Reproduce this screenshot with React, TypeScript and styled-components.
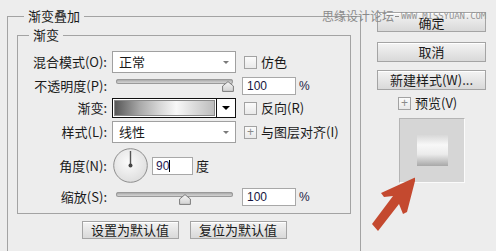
import React from 'react'
import styled, { createGlobalStyle } from 'styled-components'

const GlobalStyle = createGlobalStyle`
    html, body {
        margin: 0;
        padding: 0;
        width: 496px;
        height: 251px;
        overflow: hidden;
        background: #ededed;
    }
    body {
        font-family: 'Noto Sans CJK SC', 'Liberation Sans', sans-serif;
        font-size: 13px;
        color: #1a1a1a;
    }
`

function App() {
    return (
        <Page>
            <GlobalStyle />
            <Group>
                <Legend $offset={16}>渐变叠加</Legend>
                <Inner>
                    <Legend $offset={11}>渐变</Legend>
                    <Row $h={22} $mt={8}>
                        <Label>混合模式(O):</Label>
                        <Select>
                            正常
                            <Caret />
                        </Select>
                        <Extra>
                            <CheckBox />
                            <CheckText>仿色</CheckText>
                        </Extra>
                    </Row>
                    <Row $h={17} $mt={4}>
                        <Label>不透明度(P):</Label>
                        <Slider $top={2} pos={106} />
                        <Extra>
                            <NumberBox>100</NumberBox>
                            <Percent>%</Percent>
                        </Extra>
                    </Row>
                    <Row $h={20} $mt={4}>
                        <Label>渐变:</Label>
                        <GradientPicker>
                            <GradientBar />
                            <GradientArrow>
                                <BlackCaret />
                            </GradientArrow>
                        </GradientPicker>
                        <Extra>
                            <CheckBox />
                            <CheckText>反向(R)</CheckText>
                        </Extra>
                    </Row>
                    <Row $h={22} $mt={3}>
                        <Label>样式(L):</Label>
                        <Select>
                            线性
                            <Caret />
                        </Select>
                        <Extra>
                            <CheckBox>+</CheckBox>
                            <CheckText>与图层对齐(I)</CheckText>
                        </Extra>
                    </Row>
                    <Row $h={35} $mt={5}>
                        <Label>角度(N):</Label>
                        <Control>
                            <Dial />
                            <AngleBox>
                                90
                                <TextCaret />
                            </AngleBox>
                            <Unit>度</Unit>
                        </Control>
                    </Row>
                    <Row $h={17} $mt={5}>
                        <Label>缩放(S):</Label>
                        <Slider $top={4} pos={63} />
                        <Extra>
                            <NumberBox>100</NumberBox>
                            <Percent>%</Percent>
                        </Extra>
                    </Row>
                </Inner>
                <DefaultBar>
                    <Button $w={97} $h={18}>设置为默认值</Button>
                    <Button $w={97} $h={18}>复位为默认值</Button>
                </DefaultBar>
            </Group>
            <Side>
                <Button $w={109} $h={20} $mt={12}>
                    <ButtonText $dy={2}>确定</ButtonText>
                </Button>
                <Button $w={109} $h={20} $mt={10}>取消</Button>
                <Button $w={109} $h={20} $mt={8}>新建样式(W)...</Button>
                <PreviewToggle>
                    <CheckBox>+</CheckBox>
                    <CheckText>预览(V)</CheckText>
                </PreviewToggle>
                <PreviewBox>
                    <PreviewSwatch />
                </PreviewBox>
            </Side>
            <Watermark>
                思缘设计论坛
                <WatermarkDash />
                <WatermarkUrl>WWW.MISSYUAN.COM</WatermarkUrl>
            </Watermark>
            <Arrow width='50' height='64' viewBox='0 0 50 64'>
                <polygon points='51,7 16,23 19,27 28,26 7,54 13,61 34,34 38,44 42,42' fill='#c4492f' />
            </Arrow>
        </Page>
    )
}

function Slider({ $top, pos }: { $top: number; pos: number }) {
    return (
        <SliderWrap>
            <Track $top={$top}>
                <Thumb width='12' height='11' viewBox='0 0 12 11' $left={pos}>
                    <defs>
                        <linearGradient id='thumbFill' x1='0' y1='0' x2='0' y2='1'>
                            <stop offset='0' stopColor='#f6f6f6' />
                            <stop offset='1' stopColor='#d2d2d2' />
                        </linearGradient>
                    </defs>
                    <path d='M6 0.6 L11.4 5 L11.4 10.4 L0.6 10.4 L0.6 5 Z' fill='url(#thumbFill)' stroke='#7b7b7b' strokeWidth='1' strokeLinejoin='round' />
                </Thumb>
            </Track>
        </SliderWrap>
    )
}

function Dial() {
    return (
        <DialSvg width='35' height='35' viewBox='0 0 35 35'>
            <defs>
                <radialGradient id='dialFill' cx='0.45' cy='0.4' r='0.65'>
                    <stop offset='0' stopColor='#fbfbfb' />
                    <stop offset='1' stopColor='#dcdcdc' />
                </radialGradient>
            </defs>
            <circle cx='17.5' cy='17.5' r='16.8' fill='url(#dialFill)' stroke='#8e8e8e' strokeWidth='1' />
            <line x1='17.5' y1='3' x2='17.5' y2='17.5' stroke='#555' strokeWidth='1.4' />
            <circle cx='17.5' cy='17.5' r='2' fill='#444' />
        </DialSvg>
    )
}

const Page = styled.div`
    position: relative;
    display: flex;
    width: 496px;
    height: 251px;
    overflow: hidden;
`

const Group = styled.fieldset`
    box-sizing: border-box;
    flex: none;
    width: 354px;
    height: 270px;
    margin: 8px 0 0 7px;
    padding: 0;
    min-width: 0;
    border: 1px solid #a3a3a3;
`

const Legend = styled.legend<{ $offset: number }>`
    margin-left: ${(props) => props.$offset}px;
    padding: 0 4px;
    font-size: 13px;
    line-height: 16px;
`

const Inner = styled.fieldset`
    box-sizing: border-box;
    margin: 3px 9px 0;
    padding: 0 0 8px;
    min-width: 0;
    border: 1px solid #a3a3a3;
`

const Row = styled.div<{ $h: number; $mt: number }>`
    display: flex;
    align-items: center;
    height: ${(props) => props.$h}px;
    margin-top: ${(props) => props.$mt}px;
`

const Label = styled.div`
    flex: none;
    width: 89px;
    margin-right: 5px;
    text-align: right;
    white-space: nowrap;
    line-height: 16px;
`

const Control = styled.div`
    flex: none;
    display: flex;
    align-items: center;
    width: 124px;
`

const Select = styled.div`
    flex: none;
    box-sizing: border-box;
    display: flex;
    align-items: center;
    width: 124px;
    height: 100%;
    padding-left: 6px;
    background: #fff;
    border: 1px solid #a0a0a0;
    line-height: 16px;
`

const Caret = styled.span`
    margin-left: auto;
    margin-right: 6px;
    border-left: 3px solid transparent;
    border-right: 3px solid transparent;
    border-top: 3px solid #7a7a7a;
`

const Extra = styled.div`
    display: flex;
    align-items: center;
    margin-left: 6px;
`

const CheckBox = styled.span`
    box-sizing: border-box;
    display: flex;
    align-items: center;
    justify-content: center;
    width: 13px;
    height: 13px;
    margin-left: 2px;
    border: 1px solid #a2a2a2;
    background: linear-gradient(#fbfbfb, #e9e9e9);
    color: #8a8a8a;
    font-family: 'Liberation Sans', sans-serif;
    font-size: 12px;
    line-height: 1;
`

const CheckText = styled.span`
    margin-left: 4px;
    line-height: 16px;
    white-space: nowrap;
`

const SliderWrap = styled.div`
    flex: none;
    align-self: stretch;
    width: 124px;
    padding: 0 3px 0 4px;
    box-sizing: border-box;
`

const Track = styled.div<{ $top: number }>`
    position: relative;
    height: 5px;
    margin-top: ${(props) => props.$top}px;
    border-radius: 3px;
    background: linear-gradient(#9b9b9b, #c9c9c9 60%, #dadada);
    box-shadow: inset 0 0 0 1px #9a9a9a;
`

const Thumb = styled.svg<{ $left: number }>`
    position: absolute;
    top: 2px;
    left: ${(props) => props.$left}px;
`

const NumberBox = styled.div`
    box-sizing: border-box;
    width: 54px;
    height: 18px;
    padding-left: 4px;
    background: #fff;
    border: 1px solid #a8a8a8;
    font-family: 'Liberation Sans', sans-serif;
    font-size: 12px;
    line-height: 16px;
    color: #161640;
`

const Percent = styled.span`
    margin-left: 3px;
    font-family: 'Liberation Sans', sans-serif;
    font-size: 12px;
    color: #1c1c44;
`

const GradientPicker = styled.div`
    flex: none;
    box-sizing: border-box;
    display: flex;
    width: 124px;
    height: 100%;
    background: #fff;
    border: 1px solid #111;
`

const GradientBar = styled.div`
    flex: 1;
    margin: 1px;
    border: 1px solid #8a8a8a;
    background: linear-gradient(to right, #575757 0%, #a9a9a9 25%, #d7d7d7 45%, #f8f8f8 62%, #dedede 78%, #bdbdbd 100%);
`

const GradientArrow = styled.div`
    flex: none;
    display: flex;
    align-items: center;
    justify-content: center;
    width: 18px;
    border-left: 1px solid #111;
`

const BlackCaret = styled.span`
    border-left: 4px solid transparent;
    border-right: 4px solid transparent;
    border-top: 4px solid #000;
`

const DialSvg = styled.svg`
    flex: none;
    margin-left: 1px;
`

const AngleBox = styled.div`
    box-sizing: border-box;
    display: flex;
    align-items: center;
    width: 41px;
    height: 18px;
    margin-left: 4px;
    padding-left: 3px;
    background: #fff;
    border: 1px solid #a8a8a8;
    font-family: 'Liberation Sans', sans-serif;
    font-size: 12px;
    color: #2a1a55;
`

const TextCaret = styled.span`
    width: 1px;
    height: 12px;
    background: #000;
`

const Unit = styled.span`
    margin-left: 3px;
    line-height: 16px;
`

const DefaultBar = styled.div`
    display: flex;
    justify-content: center;
    gap: 11px;
    margin-top: 7px;
`

const Button = styled.div<{ $w: number; $h: number; $mt?: number }>`
    box-sizing: border-box;
    flex: none;
    display: flex;
    align-items: center;
    justify-content: center;
    width: ${(props) => props.$w}px;
    height: ${(props) => props.$h}px;
    margin-top: ${(props) => props.$mt ?? 0}px;
    border: 1px solid #a4a4a4;
    background: linear-gradient(#f4f4f4, #e6e6e6 50%, #d9d9d9);
    box-shadow: inset 0 1px 0 #fff;
    line-height: 16px;
    white-space: nowrap;
`

const ButtonText = styled.span<{ $dy: number }>`
    padding-top: ${(props) => props.$dy}px;
`

const Side = styled.div`
    display: flex;
    flex-direction: column;
    align-items: flex-start;
    padding-left: 16px;
`

const PreviewToggle = styled.div`
    display: flex;
    align-items: center;
    height: 12px;
    margin: 7px 0 0 19px;
`

const PreviewBox = styled.div`
    box-sizing: border-box;
    display: flex;
    align-items: center;
    justify-content: center;
    width: 66px;
    height: 65px;
    margin: 9px 0 0 22px;
    background: #d6d6d6;
    border: 1px solid;
    border-color: #b4b4b4 #fbfbfb #fbfbfb #b4b4b4;
`

const PreviewSwatch = styled.div`
    width: 31px;
    height: 31px;
    background: linear-gradient(#d8d8d8 0%, #f8f8f8 32%, #ebebeb 62%, #a8a8a8 100%);
`

const Watermark = styled.div`
    position: absolute;
    top: 8px;
    left: 322px;
    display: flex;
    align-items: center;
    color: #8a8a8a;
    font-size: 12px;
    line-height: 16px;
    white-space: nowrap;
`

const WatermarkDash = styled.span`
    width: 4px;
    height: 1px;
    margin: 1px 2px 0 1px;
    background: #8a8a8a;
`

const WatermarkUrl = styled.span`
    font-family: 'DejaVu Sans Mono', monospace;
    font-size: 9px;
    letter-spacing: -0.1px;
    color: #959595;
`

const Arrow = styled.svg`
    position: absolute;
    left: 365px;
    top: 170px;
`

export default App
